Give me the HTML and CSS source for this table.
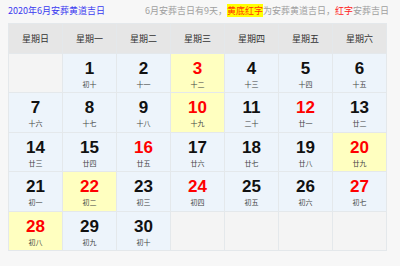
FILE: index.html
```html
<!DOCTYPE html>
<html lang="zh-CN">
<head>
<meta charset="utf-8">
<link rel="stylesheet" href="styles.css">
</head>
<body>
<div class="page">
  <div class="top">
    <span class="title">2020年6月安葬黄道吉日</span>
    <span class="note">6月安葬吉日有9天，<span class="hl">黄底红字</span>为安葬黄道吉日，<span class="red">红字</span>安葬吉日</span>
  </div>
  <div class="cal">
    <div class="hd">星期日</div><div class="hd">星期一</div><div class="hd">星期二</div><div class="hd">星期三</div><div class="hd">星期四</div><div class="hd">星期五</div><div class="hd">星期六</div>

    <div class="c empty"></div>
    <div class="c"><b>1</b><i>初十</i></div>
    <div class="c"><b>2</b><i>十一</i></div>
    <div class="c y r"><b>3</b><i>十二</i></div>
    <div class="c"><b>4</b><i>十三</i></div>
    <div class="c"><b>5</b><i>十四</i></div>
    <div class="c"><b>6</b><i>十五</i></div>

    <div class="c"><b>7</b><i>十六</i></div>
    <div class="c"><b>8</b><i>十七</i></div>
    <div class="c"><b>9</b><i>十八</i></div>
    <div class="c y r"><b>10</b><i>十九</i></div>
    <div class="c"><b>11</b><i>二十</i></div>
    <div class="c r"><b>12</b><i>廿一</i></div>
    <div class="c"><b>13</b><i>廿二</i></div>

    <div class="c"><b>14</b><i>廿三</i></div>
    <div class="c"><b>15</b><i>廿四</i></div>
    <div class="c r"><b>16</b><i>廿五</i></div>
    <div class="c"><b>17</b><i>廿六</i></div>
    <div class="c"><b>18</b><i>廿七</i></div>
    <div class="c"><b>19</b><i>廿八</i></div>
    <div class="c y r"><b>20</b><i>廿九</i></div>

    <div class="c"><b>21</b><i>初一</i></div>
    <div class="c y r"><b>22</b><i>初二</i></div>
    <div class="c"><b>23</b><i>初三</i></div>
    <div class="c r"><b>24</b><i>初四</i></div>
    <div class="c"><b>25</b><i>初五</i></div>
    <div class="c"><b>26</b><i>初六</i></div>
    <div class="c r"><b>27</b><i>初七</i></div>

    <div class="c y r"><b>28</b><i>初八</i></div>
    <div class="c"><b>29</b><i>初九</i></div>
    <div class="c"><b>30</b><i>初十</i></div>
    <div class="c empty"></div>
    <div class="c empty"></div>
    <div class="c empty"></div>
    <div class="c empty"></div>
  </div>
</div>
</body>
</html>
```
FILE: styles.css
```css
* { box-sizing: border-box; }
html, body { margin: 0; padding: 0; background: #f7f7f7; }
body {
  font-family: "Noto Sans CJK SC", "Noto Sans", sans-serif;
  width: 400px;
  height: 266px;
  overflow: hidden;
}
.page { padding: 2px 8px 0 8px; }
.top {
  display: flex;
  justify-content: space-between;
  align-items: center;
  height: 16px;
  margin-bottom: 5px;
  font-size: 9px;
  white-space: nowrap;
  width: 381px;
}
.title { color: #3a3af0; }
.note { color: #a0a0a0; }
.hl { background: #ffff00; color: #ff3300; }
.red { color: #ff2020; }

.cal {
  display: grid;
  width: 379px;
  grid-template-columns: repeat(7, 1fr);
  grid-template-rows: 29px repeat(5, 38.4px);
  gap: 1px;
  padding: 1px;
  background: #e4e8eb;
}
.hd {
  background: #e6e6e6;
  color: #333;
  font-size: 9px;
  display: flex;
  align-items: center;
  justify-content: center;
}
.c {
  background: #edf4fb;
  display: flex;
  flex-direction: column;
  align-items: center;
  padding-top: 5px;
}
.c.y { background: #ffffc0; }
.c.empty { background: #f4f4f4; }
.c b {
  font-family: "Liberation Sans", "Noto Sans", sans-serif;
  font-weight: bold;
  font-size: 17px;
  line-height: 20px;
  color: #111;
}
.c i {
  font-style: normal;
  font-size: 7px;
  line-height: 10px;
  color: #444;
}
.c.r b { color: #ff0000; }
```
